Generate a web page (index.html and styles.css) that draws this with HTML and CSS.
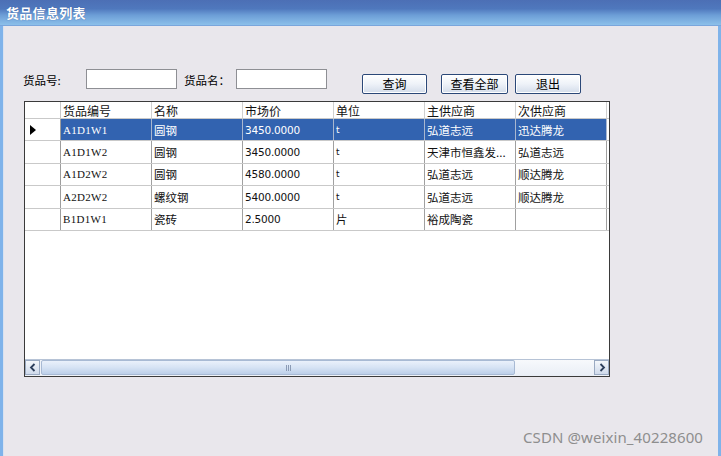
FILE: index.html
```html
<!DOCTYPE html>
<html>
<head>
<meta charset="utf-8">
<link rel="stylesheet" href="styles.css">
</head>
<body>
<div class="titlebar"><span class="title">货品信息列表</span></div>
<div class="content">
  <div class="search">
    <span class="lbl lbl1">货品号:</span>
    <input class="box" type="text">
    <span class="lbl lbl2">货品名：</span>
    <input class="box" type="text">
    <button class="btn b1">查询</button>
    <button class="btn b2">查看全部</button>
    <button class="btn b3">退出</button>
  </div>
  <div class="grid">
    <div class="rows">
      <div class="row head">
        <div class="rh"></div><div class="c">货品编号</div><div class="c">名称</div><div class="c">市场价</div><div class="c">单位</div><div class="c">主供应商</div><div class="c">次供应商</div>
      </div>
      <div class="row sel">
        <div class="rh"><span class="arrow"></span></div><div class="c mono">A1D1W1</div><div class="c">圆钢</div><div class="c num">3450.0000</div><div class="c unit">t</div><div class="c">弘道志远</div><div class="c">迅达腾龙</div>
      </div>
      <div class="row">
        <div class="rh"></div><div class="c mono">A1D1W2</div><div class="c">圆钢</div><div class="c num">3450.0000</div><div class="c unit">t</div><div class="c">天津市恒鑫发...</div><div class="c">弘道志远</div>
      </div>
      <div class="row">
        <div class="rh"></div><div class="c mono">A1D2W2</div><div class="c">圆钢</div><div class="c num">4580.0000</div><div class="c unit">t</div><div class="c">弘道志远</div><div class="c">顺达腾龙</div>
      </div>
      <div class="row">
        <div class="rh"></div><div class="c mono">A2D2W2</div><div class="c">螺纹钢</div><div class="c num">5400.0000</div><div class="c unit">t</div><div class="c">弘道志远</div><div class="c">顺达腾龙</div>
      </div>
      <div class="row">
        <div class="rh"></div><div class="c mono">B1D1W1</div><div class="c">瓷砖</div><div class="c num">2.5000</div><div class="c">片</div><div class="c">裕成陶瓷</div><div class="c"></div>
      </div>
    </div>
    <div class="hscroll">
      <div class="sbtn left"><svg width="8" height="9" viewBox="0 0 8 9"><path d="M5.5 1 L2 4.5 L5.5 8" fill="none" stroke="#2d3f5c" stroke-width="1.8"/></svg></div>
      <div class="thumb"><span class="grip"></span><span class="grip"></span><span class="grip"></span></div>
      <div class="track"></div>
      <div class="sbtn right"><svg width="8" height="9" viewBox="0 0 8 9"><path d="M2.5 1 L6 4.5 L2.5 8" fill="none" stroke="#2d3f5c" stroke-width="1.8"/></svg></div>
    </div>
  </div>
</div>
<div class="watermark">CSDN @weixin_40228600</div>
</body>
</html>
```
FILE: styles.css
```css
html, body {
  margin: 0;
  padding: 0;
  width: 721px;
  height: 456px;
  overflow: hidden;
  background: #e9e7ec;
  font-family: "Noto Sans CJK SC", "Liberation Sans", sans-serif;
  font-size: 12px;
  color: #000;
}
.titlebar {
  height: 25px;
  background: linear-gradient(to bottom, #4c6fb5 0%, #4f78bd 35%, #6c9dd6 60%, #8cc0ea 100%);
  border-bottom: 1px solid #7aa6dc;
  display: flex;
  align-items: center;
  padding-left: 6px;
}
.title {
  color: #fff;
  font-weight: bold;
  font-size: 13px;
  letter-spacing: 0.3px;
  text-shadow: 0 0 1px #35589a;
}
.content {
  height: 430px;
  border-left: 3px solid #7fb3ea;
  border-right: 3px solid #7fb3ea;
  box-shadow: inset 1px 0 0 #d9e2f0;
  background: #e9e7ec;
}
.search {
  display: flex;
  align-items: flex-start;
  height: 25px;
  padding-top: 43px;
  padding-left: 20px;
}
.lbl {
  margin-top: 4px;
  font-size: 11.5px;
  line-height: 14px;
}
.lbl1 { width: 63px; }
.lbl2 { width: 52px; margin-left: 7px; }
.box {
  width: 91px;
  height: 20px;
  box-sizing: border-box;
  border: 1px solid #8e8f94;
  background: #fff;
  margin: 0;
  padding: 0;
}
.btn {
  margin: 5px 0 0 0;
  height: 20px;
  box-sizing: border-box;
  border: 1px solid #2b4878;
  border-radius: 2px;
  background: linear-gradient(to bottom, #ffffff 0%, #eef2f8 50%, #d3dcea 100%);
  font-family: "Noto Sans CJK SC", sans-serif;
  font-size: 12px;
  line-height: 16px;
  padding: 0;
  color: #000;
  box-shadow: inset 0 0 0 1px #fff;
}
.b1 { width: 65px; margin-left: 35px; }
.b2 { width: 67px; margin-left: 14px; }
.b3 { width: 66px; margin-left: 7px; }
.grid {
  margin-top: 7px;
  margin-left: 21px;
  width: 586px;
  height: 276px;
  box-sizing: border-box;
  border: 1px solid #3a3a3a;
  background: #fff;
  display: flex;
  flex-direction: column;
}
.rows {
  flex: 1;
  overflow: hidden;
}
.row {
  display: grid;
  grid-template-columns: 36px repeat(6, 91px);
  height: 22.4px;
  box-sizing: border-box;
  border-bottom: 1px solid #c9c9c9;
}
.row.head {
  height: 17px;
  border-bottom: 1px solid #c9c9c9;
}
.rh {
  border-right: 1px solid #c9c9c9;
  position: relative;
  background: #fff;
}
.c {
  border-right: 1px solid #a0a0a0;
  padding-left: 2px;
  display: flex;
  align-items: center;
  white-space: nowrap;
  overflow: hidden;
  font-size: 11.5px;
  color: #111;
}
.row:not(.head) .rh { border-right-color: #9d9d9d; }
.head .c { border-right-color: #d0d0d0; font-size: 12px; }
.mono {
  font-family: "Liberation Serif", serif;
  font-size: 11px;
  letter-spacing: 0.3px;
}
.num {
  font-family: "DejaVu Sans", sans-serif;
  font-size: 10.5px;
  letter-spacing: -0.2px;
}
.unit {
  font-family: "DejaVu Sans", sans-serif;
  font-size: 9px;
}
.sel .c {
  background: #3263b0;
  color: #fff;
  border-right-color: #a9b7cf;
}
.arrow {
  position: absolute;
  left: 5px;
  top: 6px;
  width: 0;
  height: 0;
  border-top: 5px solid transparent;
  border-bottom: 5px solid transparent;
  border-left: 6px solid #000;
}
.hscroll {
  height: 16px;
  display: flex;
  border-top: 1px solid #b6c3d6;
  background: #eef2f8;
}
.sbtn {
  width: 15px;
  height: 15px;
  box-sizing: border-box;
  border: 1px solid #9aaac2;
  background: linear-gradient(to bottom, #f4f7fb, #cfdaeb);
  display: flex;
  align-items: center;
  justify-content: center;
}
.thumb {
  width: 474px;
  margin-left: 1px;
  height: 15px;
  box-sizing: border-box;
  border: 1px solid #a8bad4;
  border-radius: 2px;
  background: linear-gradient(to bottom, #eaf1fb 0%, #d6e3f4 50%, #bccfe9 100%);
  display: flex;
  justify-content: center;
  align-items: center;
  gap: 1px;
  padding-left: 20px;
}
.grip {
  width: 1px;
  height: 6px;
  background: #8b9bb5;
}
.track {
  flex: 1;
  background: linear-gradient(to bottom, #f7f9fc, #e9eef6);
}
.watermark {
  position: absolute;
  left: 523px;
  top: 427px;
  font-family: "Noto Sans", "Liberation Sans", sans-serif;
  font-size: 15px;
  color: #8e8e8e;
  letter-spacing: 0.1px;
}
```
